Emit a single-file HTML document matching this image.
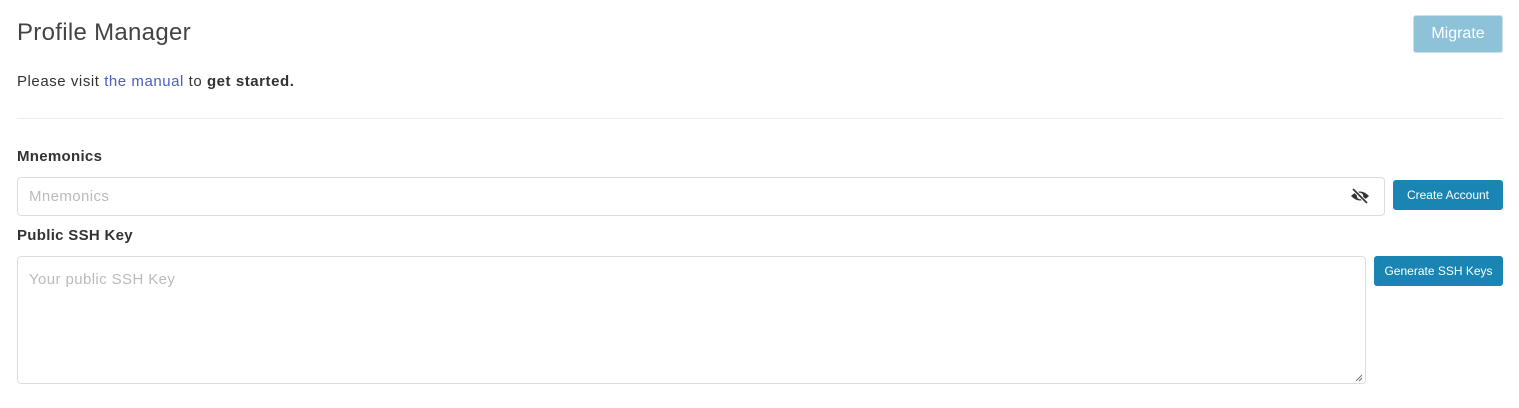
<!DOCTYPE html>
<html><head><meta charset="utf-8"><style>
*{box-sizing:border-box;margin:0;padding:0}
body{width:1519px;height:408px;background:#fff;font-family:"Liberation Sans","DejaVu Sans",sans-serif;color:#333;position:relative;overflow:hidden}
.a{position:absolute}
h1{position:absolute;left:17px;top:19px;font-size:24px;font-weight:normal;color:#444;letter-spacing:0.3px}
.btn{position:absolute;color:#fff;border-radius:3px;display:flex;align-items:center;justify-content:center}
.hr{position:absolute;left:17px;top:118px;width:1486px;height:1px;background:#eee}
label{position:absolute;left:17px;font-weight:bold;font-size:15px;color:#333;letter-spacing:0.3px}
.in{position:absolute;border:1px solid #ddd;border-radius:4px;background:#fff;color:#bbb;font-size:15px;padding-left:11px;letter-spacing:0.4px}
</style></head><body>
<h1>Profile Manager</h1>
<div class="btn" style="left:1413px;top:15px;width:90px;height:38px;background:#8ec2d9;font-size:16px;border:1px solid #c9e1ea">Migrate</div>
<div class="a" style="left:17px;top:73px;font-size:15px;color:#333;letter-spacing:0.55px">Please visit <span style="color:#4a5fc1">the manual</span> to <b>get started.</b></div>
<div class="hr"></div>
<label style="top:148px">Mnemonics</label>
<div class="in" style="left:17px;top:177px;width:1368px;height:39px;line-height:37px">Mnemonics</div>
<svg class="a" style="left:1350px;top:186px" width="20" height="20" viewBox="0 0 20 20"><path d="M1 10 Q10 1 19 10 Q10 19 1 10Z" fill="#333"/><circle cx="10" cy="10" r="3.2" fill="#fff"/><circle cx="10" cy="10" r="1.8" fill="#333"/><line x1="3" y1="3" x2="17" y2="17" stroke="#fff" stroke-width="3.5"/><line x1="3" y1="3" x2="17" y2="17" stroke="#333" stroke-width="1.6"/></svg>
<div class="btn" style="left:1393px;top:180px;width:110px;height:30px;background:#1a84b3;font-size:12px">Create Account</div>
<label style="top:227px">Public SSH Key</label>
<div class="in" style="left:17px;top:256px;width:1349px;height:128px;padding-top:14px">Your public SSH Key</div>
<svg class="a" style="left:1355px;top:374px" width="8" height="8" viewBox="0 0 8 8"><path d="M7 1L1 7M7 4L4 7" stroke="#777" stroke-width="1"/></svg>
<div class="btn" style="left:1374px;top:256px;width:129px;height:30px;background:#1a84b3;font-size:12px">Generate SSH Keys</div>
</body></html>
